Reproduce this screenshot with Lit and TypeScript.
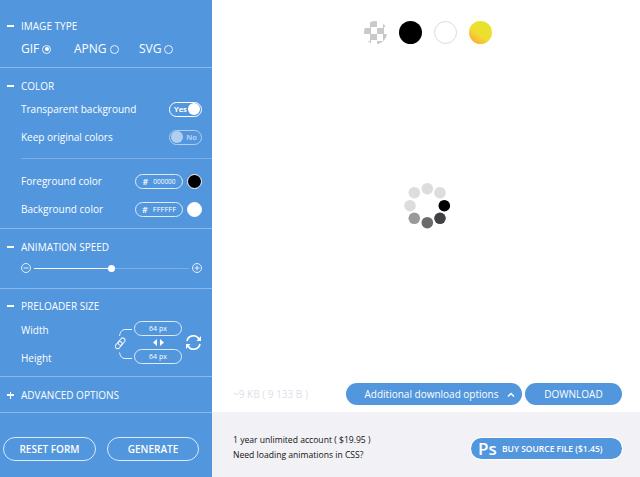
import { LitElement, html, css, svg } from "lit";
import { customElement } from "lit/decorators.js";

const dots = [
  [444.3, 205.7, "#000"], [440, 218.3, "#404045"], [427.3, 222.7, "#6b6b6b"], [414.3, 218.3, "#999"],
  [410, 205.7, "#ddd"], [414.3, 192.7, "#ddd"], [427.3, 188.7, "#ddd"], [440, 192.7, "#ddd"],
];

@customElement("app-root")
export class AppRoot extends LitElement {
  static styles = css`
    :host { display: block; width: 640px; height: 477px; overflow: hidden; font-family: "Open Sans", sans-serif; color: #fff; background: #fff; }
    .page { display: flex; height: 477px; }
    .side { width: 212px; flex: none; background: #5296dd; display: flex; flex-direction: column; }
    .sec { border-bottom: 1px solid #8ab8ea; padding-left: 21px; position: relative; box-sizing: border-box; }
    .s1 { height: 68px; padding-top: 18px; }
    .s2 { height: 161px; padding-top: 10px; }
    .s3 { height: 60px; padding-top: 10px; }
    .s4 { height: 88px; padding-top: 9px; }
    .s5 { height: 36px; padding-top: 10px; }
    .head { font-size: 10px; line-height: 16px; height: 16px; display: flex; align-items: center; margin-left: -14px; gap: 7px; }
    .head i { width: 7px; height: 1.6px; background: #fff; display: block; position: relative; }
    .head i.plus::after { content: ""; position: absolute; left: 2.7px; top: -2.7px; width: 1.6px; height: 7px; background: #fff; }
    .types { display: flex; margin-top: 6px; font-size: 12px; line-height: 18px; height: 18px; align-items: center; }
    .type { display: flex; align-items: center; gap: 3px; }
    .type.a { width: 53px; } .type.b { width: 65px; }
    .radio { width: 7px; height: 7px; border: 1px solid #e8f1fb; border-radius: 50%; display: block; position: relative; box-sizing: content-box; }
    .radio.on::after { content: ""; position: absolute; inset: 1.5px; background: #fff; border-radius: 50%; }
    .row { display: flex; align-items: center; justify-content: space-between; font-size: 10px; height: 28px; padding-right: 10px; }
    .rows { margin-top: 1px; }
    .rule { height: 1px; background: #7cafe6; margin: 7px 0 8px; }
    .toggle { width: 33px; height: 15px; box-sizing: border-box; border: 1px solid #fff; border-radius: 8px; display: flex; align-items: center; justify-content: space-between; font-size: 7.5px; font-weight: 700; padding: 0 1px 0 4px; }
    .toggle b { width: 12px; height: 12px; border-radius: 50%; background: #fff; display: block; }
    .toggle.off { opacity: .55; padding: 0 4px 0 1px; }
    .field { display: flex; align-items: center; gap: 4px; }
    .pill { width: 48px; height: 15px; box-sizing: border-box; border: 1px solid #dceafa; border-radius: 8px; display: flex; align-items: center; justify-content: center; font-size: 6.5px; gap: 5px; }
    .pill.f { font-size: 7.5px; }
    .pill.px { font-size: 7px; }
    .pill em { font-style: normal; font-size: 9px; font-weight: 600; }
    .swatch { width: 15px; height: 15px; box-sizing: border-box; border: 1px solid #fff; border-radius: 50%; }
    .swatch.k { background: #000; } .swatch.w { background: #fff; }
    .slider { display: flex; align-items: center; margin-top: 6px; padding-right: 10px; height: 14px; }
    .slider svg { display: block; flex: none; }
    .track { flex: 1; height: 1px; background: #7cafe6; margin: 0 3px; position: relative; }
    .fill { height: 1px; width: 77px; background: #fff; }
    .knob { position: absolute; left: 74px; top: -3px; width: 7px; height: 7px; background: #fff; border-radius: 50%; }
    .size { display: flex; margin-top: 2px; padding-right: 10px; }
    .labels { font-size: 10px; line-height: 28px; flex: 1; }
    .pillcol { width: 48px; display: flex; flex-direction: column; align-items: center; margin-right: 3px; margin-top: 5px; }
    .arrows { height: 13px; display: flex; align-items: center; }
    .size svg { flex: none; }
    .link { margin: 12px 1px 0 0; }
    .refresh { margin-top: 18px; }
    .foot { flex: 1; display: flex; gap: 11px; padding: 24px 0 0 3px; box-sizing: border-box; }
    .btn { width: 93px; height: 24px; border: 1px solid #dceafa; border-radius: 12px; box-sizing: border-box; font-size: 10px; font-weight: 600; display: flex; align-items: center; justify-content: center; }
    .btn.g { width: 92px; }
    .main { flex: 1; display: flex; flex-direction: column; color: #222; }
    .stage { height: 412px; position: relative; box-sizing: border-box; }
    .swatches { display: flex; gap: 12px; padding: 21px 0 0 152px; }
    .sw { width: 23px; height: 23px; border-radius: 50%; box-sizing: border-box; }
    .sw.check { background: repeating-conic-gradient(#c9c9c9 0 25%, #fff 0 50%) 0 0 / 13px 13px; }
    .sw.black { background: #000; }
    .sw.white { border: 1px solid #d8dbe8; background: #fff; }
    .sw.grad { background: linear-gradient(35deg, #ffa938 10%, #efdc30 42%, #e2e62e 85%); }
    .spin { position: absolute; left: 0; top: 0; }
    .bar { position: absolute; left: 0; right: 0; top: 383px; height: 22px; display: flex; align-items: center; padding-left: 21px; padding-right: 18px; }
    .weight { color: #dcdfe8; font-size: 10px; flex: 1; }
    .dl { height: 22px; background: #5296dd; color: #fff; border-radius: 11px; display: flex; align-items: center; justify-content: center; font-size: 10px; box-sizing: border-box; }
    .dl.more { width: 176px; margin-right: 3px; gap: 9px; padding-left: 12px; }
    .dl.go { width: 97px; }
    .bottom { flex: 1; background: #f1f1f6; display: flex; align-items: center; padding: 6px 18px 0 21px; justify-content: space-between; }
    .info { font-size: 8.6px; line-height: 15px; color: #111; }
    .ps { width: 151px; height: 21px; margin-top: 2px; border-radius: 11px; background: #5296dd; box-shadow: 0 0 0 1px #fff; color: #fff; display: flex; align-items: center; box-sizing: border-box; padding-left: 7px; }
    .ps strong { font-size: 17px; font-weight: 600; width: 24px; }
    .ps span { font-size: 8.5px; font-weight: 600; }
  `;

  render() {
    const toggle = (on: boolean) => html`<div class="toggle ${on ? "" : "off"}">${on ? html`<span>Yes</span><b></b>` : html`<b></b><span>No</span>`}</div>`;
    const head = (t: string, plus = false) => html`<div class="head"><i class="${plus ? "plus" : ""}"></i><span>${t}</span></div>`;
    return html`<div class="page">
      <div class="side">
        <div class="sec s1">
          ${head("IMAGE TYPE")}
          <div class="types">
            <div class="type a">GIF<span class="radio on"></span></div>
            <div class="type b">APNG<span class="radio"></span></div>
            <div class="type">SVG<span class="radio"></span></div>
          </div>
        </div>
        <div class="sec s2">
          ${head("COLOR")}
          <div class="rows">
            <div class="row">Transparent background ${toggle(true)}</div>
            <div class="row">Keep original colors ${toggle(false)}</div>
          </div>
          <div class="rule"></div>
          <div class="row">Foreground color <div class="field"><div class="pill"><em>#</em>000000</div><div class="swatch k"></div></div></div>
          <div class="row">Background color <div class="field"><div class="pill f"><em>#</em>FFFFFF</div><div class="swatch w"></div></div></div>
        </div>
        <div class="sec s3">
          ${head("ANIMATION SPEED")}
          <div class="slider">
            <svg width="10" height="10" viewBox="0 0 10 10" fill="none" stroke="#e4effb"><circle cx="5" cy="5" r="4.5"/><path d="M2.5 5h5"/></svg>
            <div class="track"><div class="fill"></div><div class="knob"></div></div>
            <svg width="10" height="10" viewBox="0 0 10 10" fill="none" stroke="#e4effb"><circle cx="5" cy="5" r="4.5"/><path d="M2.5 5h5M5 2.5v5"/></svg>
          </div>
        </div>
        <div class="sec s4">
          ${head("PRELOADER SIZE")}
          <div class="size">
            <div class="labels">Width<br />Height</div>
            <svg class="link" width="18" height="32" viewBox="0 0 18 32" fill="none" stroke="#e4effb">
              <path d="M17 1.5H10Q5.5 1.5 4.5 8"/><path d="M4.5 24.5Q5.5 30.5 10 30.5H17"/>
              <g transform="rotate(-50 5 15.5)" stroke-width="1.1">
                <rect x="-1" y="13.2" width="8" height="4.6" rx="2.3"/><rect x="3.5" y="13.2" width="8" height="4.6" rx="2.3"/>
              </g>
            </svg>
            <div class="pillcol">
              <div class="pill px">64 px</div>
              <div class="arrows"><svg width="11" height="7" viewBox="0 0 11 7" fill="#fff"><path d="M4 0v7L0 3.5zM7 0v7l4-3.5z"/></svg></div>
              <div class="pill px">64 px</div>
            </div>
            <svg class="refresh" width="17" height="17" viewBox="0 0 17 17" fill="none" stroke="#fff" stroke-width="1.6">
              <path d="M2 7a6.5 6.5 0 0 1 12-2"/><path d="M15 10a6.5 6.5 0 0 1-12 2"/>
              <path d="M16 2v5h-4.5z" fill="#fff" stroke="none"/><path d="M1 15v-5h4.5z" fill="#fff" stroke="none"/>
            </svg>
          </div>
        </div>
        <div class="sec s5">${head("ADVANCED OPTIONS", true)}</div>
        <div class="foot"><div class="btn">RESET FORM</div><div class="btn g">GENERATE</div></div>
      </div>
      <div class="main">
        <div class="stage">
          <div class="swatches">
            <div class="sw check"></div><div class="sw black"></div><div class="sw white"></div><div class="sw grad"></div>
          </div>
          <svg class="spin" width="428" height="412" viewBox="212 0 428 412">
            ${dots.map((d) => svg`<circle cx=${d[0]} cy=${d[1]} r="5.8" fill=${d[2]}></circle>`)}
          </svg>
          <div class="bar">
            <div class="weight">~9 KB ( 9 133 B )</div>
            <div class="dl more">Additional download options
              <svg width="8" height="5" viewBox="0 0 8 5" fill="none" stroke="#fff" stroke-width="1.5"><path d="M1 4.5l3-3 3 3"/></svg>
            </div>
            <div class="dl go">DOWNLOAD</div>
          </div>
        </div>
        <div class="bottom">
          <div class="info">1 year unlimited account ( $19.95 )<br />Need loading animations in CSS?</div>
          <div class="ps"><strong>Ps</strong><span>BUY SOURCE FILE ($1.45)</span></div>
        </div>
      </div>
    </div>`;
  }
}
